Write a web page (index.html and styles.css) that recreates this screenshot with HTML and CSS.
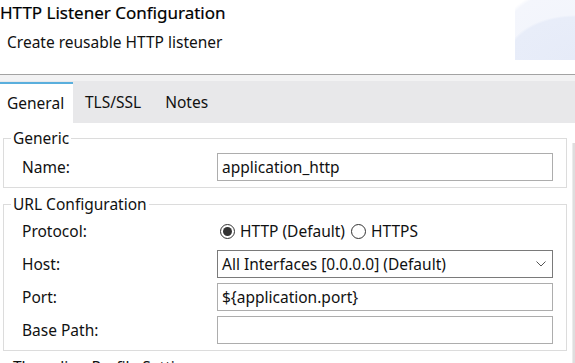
FILE: index.html
```html
<!DOCTYPE html>
<html>
<head>
<meta charset="utf-8">
<title>HTTP Listener Configuration</title>
<link rel="stylesheet" href="styles.css">
</head>
<body>
<div class="hdr">
	<h2 class="hd-title">HTTP Listener Configuration</h2>
	<p class="hd-sub">Create reusable HTTP listener</p>
</div>
<div class="strip"></div>
<div class="tabs">
	<div class="tab tab-active">General</div>
	<div class="tab">TLS/SSL</div>
	<div class="tab">Notes</div>
</div>
<div class="body">
	<div class="main">
		<fieldset class="grp">
			<legend>Generic</legend>
			<div class="rows">
				<label class="lbl">Name:</label>
				<div class="inp">application_http</div>
			</div>
		</fieldset>
		<fieldset class="grp grp-url">
			<legend>URL Configuration</legend>
			<div class="rows">
				<label class="lbl">Protocol:</label>
				<div class="radios">
					<span class="radio radio-on"></span><span class="rtxt">HTTP (Default)</span>
					<span class="radio"></span><span class="rtxt">HTTPS</span>
				</div>
				<label class="lbl">Host:</label>
				<div class="inp sel">
					<span>All Interfaces [0.0.0.0] (Default)</span>
					<svg class="chev" width="10" height="6" viewBox="0 0 10 6"><path d="M0.5 0.5 L5 5 L9.5 0.5" fill="none" stroke="#555" stroke-width="1"/></svg>
				</div>
				<label class="lbl">Port:</label>
				<div class="inp">${application.port}</div>
				<label class="lbl">Base Path:</label>
				<div class="inp"></div>
			</div>
		</fieldset>
		<fieldset class="grp grp-last">
			<legend>Threading Profile Settings</legend>
		</fieldset>
	</div>
	<div class="sbar"></div>
</div>
</body>
</html>
```
FILE: styles.css
```css
*,*:before,*:after{
	padding: 0;
	margin: 0;
	box-sizing: border-box;
}
body{
	width: 575px;
	height: 363px;
	overflow: hidden;
	font-family: "Noto Sans", "Open Sans", sans-serif;
	font-size: 15.5px;
	color: #111;
	background: #fff;
}
.hdr{
	position: relative;
	height: 74px;
	padding-top: 1px;
	background: #fff;
}
/* decorative corner swoosh */
.hdr:after{
	content: "";
	position: absolute;
	top: 0;
	right: 0;
	width: 60px;
	height: 60px;
	background:
		radial-gradient(ellipse 70px 45px at 100% 100%, #e6ebf8 0, #e8edf9 95%, transparent 100%),
		radial-gradient(ellipse 85px 75px at 100% 100%, #f1f4fc 0, #f4f6fc 95%, transparent 100%);
}
.hd-title{
	font-size: 17px;
	font-weight: normal;
	line-height: 24px;
	color: #000;
	-webkit-text-stroke: 0.2px #000;
}
.hd-sub{
	font-size: 15.5px;
	line-height: 20px;
	margin-top: 7px;
	padding-left: 7px;
	color: #111;
}
.strip{
	height: 7px;
	border-top: 1px solid #a3a3a3;
	background: #f2f2f3;
}
.tabs{
	display: flex;
	height: 42px;
	padding-top: 1px;
	background: #e8e8ea;
}
.tab{
	height: 41px;
	line-height: 41px;
	padding: 0 12px;
	color: #111;
}
.tab:first-child{
	padding-left: 7px;
}
.tab-active{
	background: #fff;
	border-top: 2px solid #5aafdd;
	line-height: 38px;
	width: 73px;
}
.body{
	display: flex;
	height: 240px;
}
.main{
	flex: 1;
}
.sbar{
	width: 3px;
	margin-top: 20px;
	margin-left: 4px;
	background: #dedede;
	border-left: 1px solid #ececec;
}
.grp{
	margin: 5px 1px 0 3px;
	border: 1px solid #dcdcdc;
	padding: 0 13px 6px 18px;
}
.grp-url{
	margin-top: 6px;
}
.grp-last{
	margin-top: 6px;
	height: 40px;
}
.grp legend{
	margin-left: -11px;
	padding: 0 2px;
	line-height: 20px;
	color: #111;
}
.rows{
	display: grid;
	grid-template-columns: 195px 1fr;
	row-gap: 5px;
	padding-top: 5px;
}
.grp-url .rows{
	padding-top: 3px;
}
.lbl{
	height: 28px;
	line-height: 28px;
	color: #111;
}
.inp{
	height: 28px;
	line-height: 26px;
	border: 1px solid #adadad;
	padding: 0 4px;
	color: #111;
	white-space: nowrap;
	overflow: hidden;
}
.sel{
	display: flex;
	justify-content: space-between;
	align-items: center;
	border-color: #7a7a7a;
	padding-right: 6px;
}
.chev{
	display: block;
}
.radios{
	display: flex;
	align-items: center;
	height: 28px;
	padding-left: 3px;
}
.radio{
	width: 15px;
	height: 15px;
	border: 1px solid #333;
	border-radius: 50%;
	display: flex;
	align-items: center;
	justify-content: center;
	margin-right: 5px;
}
.radio-on:after{
	content: "";
	width: 9px;
	height: 9px;
	border-radius: 50%;
	background: #333;
}
.rtxt{
	margin-right: 6px;
}
```
